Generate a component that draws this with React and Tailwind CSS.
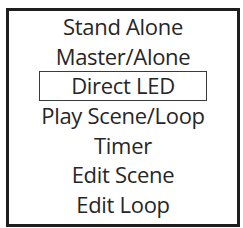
export default function App() {
  const items = ['Stand Alone', 'Master/Alone', 'Direct LED', 'Play Scene/Loop', 'Timer', 'Edit Scene', 'Edit Loop'];
  return (
    <div className="w-[243px] h-[228px] bg-white pt-[8px] pl-[6px]">
      <div
        className="w-[234px] h-[219px] border-[3px] border-[#1e1e1e] flex flex-col items-center pt-[1px] text-[#262626] text-[22px] font-medium leading-[29.6px] tracking-[-0.3px]"
        style={{ fontFamily: '"Open Sans", sans-serif' }}
      >
        {items.map((t) =>
          t === 'Direct LED' ? (
            <div key={t} className="w-[168px] h-[30px] border-[1.5px] border-[#3a3a3a] text-center leading-[27px]">
              {t}
            </div>
          ) : (
            <div key={t} className="text-center">{t}</div>
          )
        )}
      </div>
    </div>
  );
}
